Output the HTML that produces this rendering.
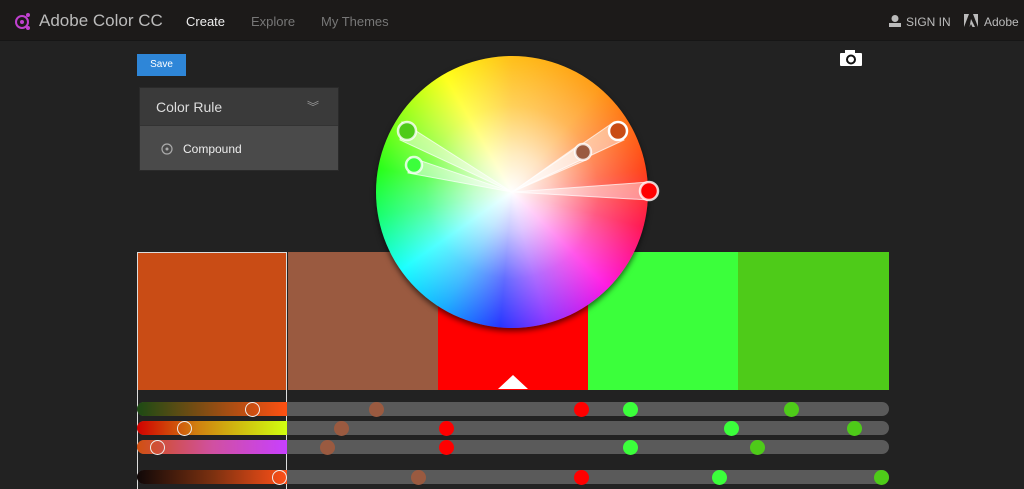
<!DOCTYPE html>
<html><head><meta charset="utf-8"><style>
*{margin:0;padding:0;box-sizing:border-box}
body{width:1024px;height:489px;background:#222;font-family:"Liberation Sans",sans-serif;position:relative;overflow:hidden}
.hdr{position:absolute;left:0;top:0;width:1024px;height:41px;background:#1c1a19;border-bottom:1px solid #161616}
.t{position:absolute;color:#ccc;font-size:13px}
.sw{position:absolute;top:252px;height:138px}
.row{position:absolute;height:14px;border-radius:7px;background:#5a5a5a;left:137px;width:752px}
.g{position:absolute;left:0;top:0;height:14px;width:150px;border-radius:7px 0 0 7px}
.d{position:absolute;width:15px;height:15px;border-radius:50%;top:-0.5px;margin-left:-7.5px}
.o{position:absolute;width:15px;height:15px;border-radius:50%;border:1.5px solid #eee;top:-0.5px;margin-left:-7.5px}
</style></head><body>
<div class="hdr">
<svg style="position:absolute;left:14px;top:12px" width="18" height="18"><circle cx="8" cy="10" r="6" fill="none" stroke="#c040d0" stroke-width="2"/><circle cx="8" cy="10" r="2" fill="#c040d0"/><circle cx="14" cy="3" r="2" fill="#c040d0"/><circle cx="14" cy="16" r="2" fill="#c040d0"/></svg>
<div class="t" style="left:39px;top:11px;font-size:17px;color:#bbb">Adobe Color CC</div>
<div class="t" style="left:186px;top:14px;color:#eee">Create</div>
<div class="t" style="left:251px;top:14px;color:#777">Explore</div>
<div class="t" style="left:321px;top:14px;color:#777">My Themes</div>
<svg style="position:absolute;left:889px;top:15px" width="12" height="12"><circle cx="6" cy="3.5" r="3.5" fill="#bbb"/><rect x="0" y="8" width="12" height="4" fill="#bbb"/></svg>
<div class="t" style="left:906px;top:15px;font-size:12px;color:#bbb">SIGN IN</div>
<svg style="position:absolute;left:964px;top:14px" width="14" height="13"><path d="M0 13L5 0H0zM14 13L9 0h5zM7 5l4 8H8.5L7 10 5.5 13z" fill="#bbb"/></svg>
<div class="t" style="left:984px;top:15px;font-size:12px;color:#bbb">Adobe</div>
</div>
<div style="position:absolute;left:137px;top:54px;width:49px;height:22px;background:#2e86d8;color:#fff;font-size:10px;text-align:center;line-height:22px">Save</div>
<svg style="position:absolute;left:840px;top:50px" width="22" height="16"><rect x="0" y="3" width="22" height="13" rx="1" fill="#fff"/><rect x="5" y="0" width="10" height="4" fill="#fff"/><circle cx="11" cy="9.5" r="4" fill="none" stroke="#111" stroke-width="2"/></svg>
<div style="position:absolute;left:139px;top:87px;width:200px;height:84px;background:#4a4a4a;border:1px solid #2a2a2a">
<div style="height:38px;background:#3a3a3a;border-bottom:1px solid #333"></div>
<div class="t" style="left:16px;top:11px;font-size:14px;color:#ddd">Color Rule</div>
<div class="t" style="left:167px;top:10px;color:#999;font-size:12px">&#xFE3E;</div>
<svg style="position:absolute;left:21px;top:55px" width="12" height="12"><circle cx="6" cy="6" r="5" fill="none" stroke="#aaa" stroke-width="1.2"/><circle cx="6" cy="6" r="1.5" fill="#aaa"/></svg>
<div class="t" style="left:43px;top:54px;font-size:12px;color:#eee">Compound</div>
</div>
<div class="sw" style="left:137px;width:150px;border:1px solid #ddd;border-bottom:none;height:237px;background:linear-gradient(#c94c15 0,#c94c15 137px,transparent 137px)"></div>
<div class="sw" style="left:288px;width:150px;background:#9a5a40"></div>
<div class="sw" style="left:438px;width:150px;background:#ff0000"></div>
<div class="sw" style="left:588px;width:150px;background:#3bff3b"></div>
<div class="sw" style="left:738px;width:151px;background:#4ecb19"></div>
<div style="position:absolute;left:498px;top:375px;width:0;height:0;border-left:15px solid transparent;border-right:15px solid transparent;border-bottom:14px solid #fff"></div>
<div style="position:absolute;left:376px;top:56px;width:272px;height:272px;border-radius:50%;background:conic-gradient(from 0deg,#ffb800,#ff9000 40deg,#ff3000 80deg,#ff0040 105deg,#ff00e0 135deg,#8020ff 165deg,#1020ff 185deg,#00a0ff 210deg,#00ffff 235deg,#00ff60 260deg,#10ff00 280deg,#a0ff00 310deg,#ffff00 330deg,#ffb800);box-shadow:0 3px 6px rgba(0,0,0,.6)"></div>
<div style="position:absolute;left:376px;top:56px;width:272px;height:272px;border-radius:50%;background:radial-gradient(circle,rgba(255,255,255,1) 0,rgba(255,255,255,.75) 20%,rgba(255,255,255,.35) 45%,rgba(255,255,255,0) 80%)"></div>
<svg style="position:absolute;left:0;top:0" width="1024" height="489">
<g fill="rgba(255,255,255,.45)" stroke="rgba(255,255,255,.7)" stroke-width="1">
<polygon points="512,192 402,122 400,140"/><polygon points="512,192 410,157 408,173"/>
<polygon points="512,192 614,122 624,140"/><polygon points="512,192 580,144 586,160"/>
<polygon points="512,192 649,182 649,200"/></g>
<g stroke="rgba(255,255,255,.8)" stroke-width="2.5"><circle cx="407" cy="131" r="9" fill="#4ecb19"/><circle cx="414" cy="165" r="8" fill="#3bff3b"/><circle cx="618" cy="131" r="9" fill="#c94c15" stroke="#fff"/><circle cx="583" cy="152" r="8" fill="#9a5a40"/><circle cx="649" cy="191" r="9" fill="#ff0000"/></g>
</svg>
<div class="row" style="top:402px"><div class="g" style="background:linear-gradient(90deg,#1c4a14,#ff5012)"></div><div class="o" style="left:115px"></div>
<div class="d" style="left:239px;background:#9a5a40"></div><div class="d" style="left:444px;background:#f00"></div><div class="d" style="left:493px;background:#3bff3b"></div><div class="d" style="left:654px;background:#4ecb19"></div></div>
<div class="row" style="top:421px"><div class="g" style="background:linear-gradient(90deg,#d00000,#d08010 40%,#d0ff10)"></div><div class="o" style="left:47px"></div>
<div class="d" style="left:204px;background:#9a5a40"></div><div class="d" style="left:309px;background:#f00"></div><div class="d" style="left:594px;background:#3bff3b"></div><div class="d" style="left:717px;background:#4ecb19"></div></div>
<div class="row" style="top:440px"><div class="g" style="background:linear-gradient(90deg,#d05010,#d050a0 50%,#c840ff)"></div><div class="o" style="left:20px"></div>
<div class="d" style="left:190px;background:#9a5a40"></div><div class="d" style="left:309px;background:#f00"></div><div class="d" style="left:493px;background:#3bff3b"></div><div class="d" style="left:620px;background:#4ecb19"></div></div>
<div class="row" style="top:470px"><div class="g" style="background:linear-gradient(90deg,#100808,#7a3010 50%,#ff5018)"></div><div class="o" style="left:142px"></div>
<div class="d" style="left:281px;background:#9a5a40"></div><div class="d" style="left:444px;background:#f00"></div><div class="d" style="left:582px;background:#3bff3b"></div><div class="d" style="left:744px;background:#4ecb19"></div></div>
</body></html>
